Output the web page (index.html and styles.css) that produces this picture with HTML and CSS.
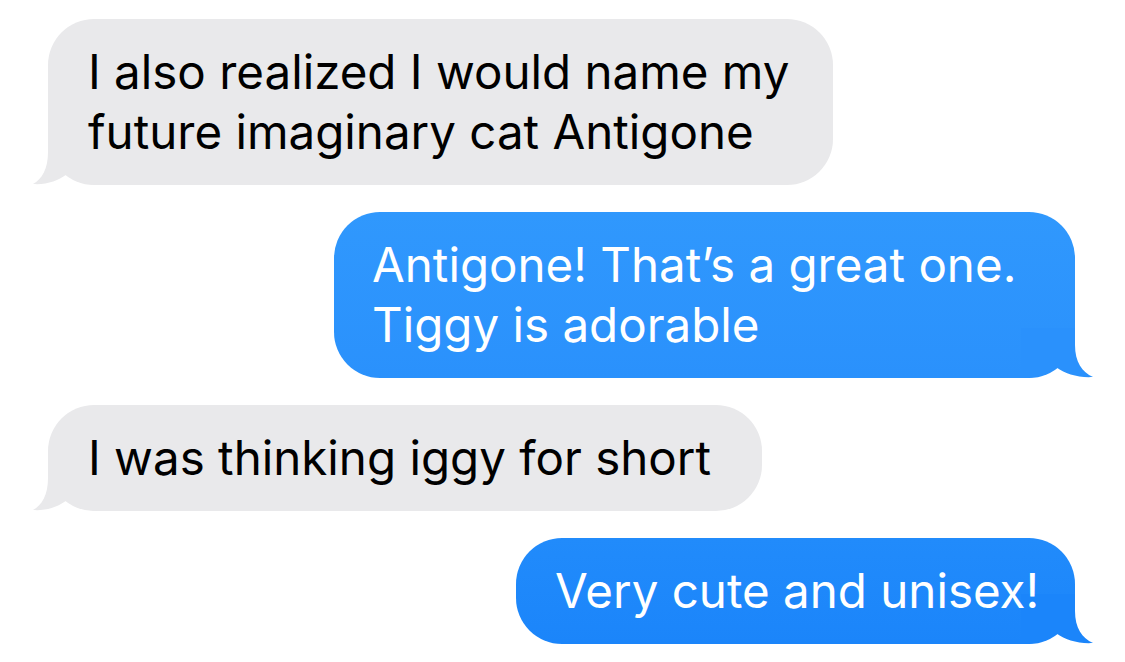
FILE: index.html
```html
<!DOCTYPE html>
<html>
<head>
<meta charset="utf-8">
<link rel="stylesheet" href="styles.css">
</head>
<body>
<main class="thread">
  <div class="bubble received first">
    <svg class="tail" viewBox="0 0 70 50" width="70" height="50" aria-hidden="true"><path d="M16,0 L16,17 C16,34 10,44 1,49 C14,50 26,46 35,39 C44,46 55,50 68,50 L70,50 L70,0 Z"/></svg>
    <span class="text">I also realized I would name my<br>future imaginary cat Antigone</span>
  </div>
  <div class="bubble sent upper">
    <svg class="tail" viewBox="-3 0 73 50" width="73" height="50" aria-hidden="true"><path d="M16,0 L16,17 C16,34 9,44 -2,49 C12,50 26,46 35,39 C44,46 55,50 68,50 L70,50 L70,0 Z"/></svg>
    <span class="text">Antigone! That’s a great one.<br>Tiggy is adorable</span>
  </div>
  <div class="bubble received third">
    <svg class="tail" viewBox="0 0 70 50" width="70" height="50" aria-hidden="true"><path d="M16,0 L16,17 C16,34 10,44 1,49 C14,50 26,46 35,39 C44,46 55,50 68,50 L70,50 L70,0 Z"/></svg>
    <span class="text">I was thinking iggy for short</span>
  </div>
  <div class="bubble sent lower">
    <svg class="tail" viewBox="-3 0 73 50" width="73" height="50" aria-hidden="true"><path d="M16,0 L16,17 C16,34 9,44 -2,49 C12,50 26,46 35,39 C44,46 55,50 68,50 L70,50 L70,0 Z"/></svg>
    <span class="text">Very cute and unisex!</span>
  </div>
</main>
</body>
</html>
```
FILE: styles.css
```css
html, body {
  margin: 0;
  padding: 0;
  background: #ffffff;
}
.thread {
  display: flex;
  flex-direction: column;
  gap: 27px;
  padding: 19px 50px 0 48px;
  font-family: Inter, "Noto Sans", "Liberation Sans", sans-serif;
  font-size: 47.5px;
  line-height: 60px;
  letter-spacing: 0;
}
.bubble {
  position: relative;
  box-sizing: border-box;
  padding: 23px 0 23px 40px;
  border-radius: 46px;
  white-space: nowrap;
}
.bubble .text {
  position: relative;
}
.tail {
  position: absolute;
  bottom: 0;
  display: block;
}
.received {
  align-self: flex-start;
  background: #e9e9eb;
  color: #000000;
}
.received .tail {
  left: -16px;
  fill: #e9e9eb;
}
.first { width: 785px; }
.third { width: 714px; }
.sent {
  align-self: flex-end;
  color: #ffffff;
}
.sent .tail {
  right: -19px;
  transform: scaleX(-1);
}
.sent.upper {
  width: 741px;
  padding-left: 38px;
  background: linear-gradient(#3098fd, #2a91fc);
}
.sent.upper .tail {
  fill: #2a91fc;
}
.sent.lower {
  width: 559px;
  padding-left: 39px;
  background: linear-gradient(#218bfb, #1b85fa);
}
.sent.lower .tail {
  fill: #1b85fa;
}
```
